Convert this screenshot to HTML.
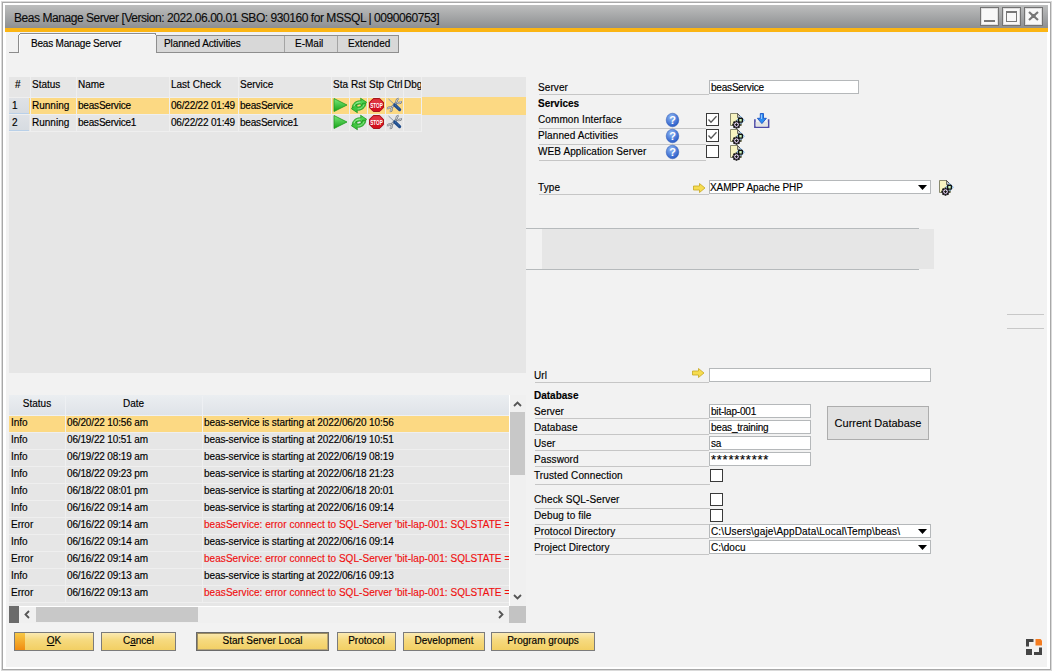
<!DOCTYPE html><html><head><meta charset="utf-8"><style>
*{margin:0;padding:0;box-sizing:border-box}
html,body{width:1054px;height:672px;overflow:hidden;background:#fff}
body{position:relative;font-family:"Liberation Sans",sans-serif;font-size:10px;color:#000}
.a{position:absolute}
.t{position:absolute;white-space:nowrap;line-height:12px;font-size:10px;-webkit-text-stroke:0.15px currentColor}
.b{font-weight:bold}
.fld{position:absolute;border:1px solid #b5b8ba;background:#fff}
.cb{position:absolute;width:13px;height:13px;border:1px solid #3a3a3a;background:#fff}
.btn{position:absolute;top:632px;height:19px;border:1px solid #7b7b7b;background:linear-gradient(#fbeab3,#f6da80 40%,#f2cf63);}
.ll{position:absolute;height:1px;background:#c6c6c6}
svg{position:absolute;overflow:visible}
</style></head><body>
<div class="a" style="left:1px;top:1px;width:1051px;height:670px;border:1px solid #dadada"></div>
<div class="a" style="left:2px;top:2px;width:1049px;height:668px;border:1px solid #a8a8a8;background:#fff"></div>
<div class="a" style="left:5px;top:5px;width:1043px;height:23px;background:linear-gradient(#bdbebe,#8d8f91)"></div>
<div class="t" style="left:14px;top:10px;font-size:12px;line-height:16px;letter-spacing:-0.45px;color:#0a0a0a;-webkit-text-stroke:0.1px #0a0a0a">Beas Manage Server [Version: 2022.06.00.01 SBO: 930160 for MSSQL | 0090060753]</div>
<div class="a" style="left:980px;top:7px;width:19px;height:19px;border:1px solid #737373;background:#f8f8f8;box-shadow:inset 0 0 0 1px #dedede"></div>
<div class="a" style="left:1002px;top:7px;width:19px;height:19px;border:1px solid #737373;background:#f8f8f8;box-shadow:inset 0 0 0 1px #dedede"></div>
<div class="a" style="left:1024px;top:7px;width:19px;height:19px;border:1px solid #737373;background:#f8f8f8;box-shadow:inset 0 0 0 1px #dedede"></div>
<div class="a" style="left:984px;top:20px;width:11px;height:2px;background:#777"></div>
<div class="a" style="left:1006px;top:11px;width:11px;height:11px;border:1px solid #777;border-top-width:2px"></div>
<svg style="left:1028px;top:11px" width="11" height="10"><path d="M1 1L10 9M10 1L1 9" stroke="#777" stroke-width="2.2"/><rect x="3.5" y="3" width="4" height="4" fill="#777"/></svg>
<div class="a" style="left:5px;top:28px;width:1043px;height:4px;background:#fbb514"></div>
<div class="a" style="left:6px;top:32px;width:1041px;height:1px;background:#eef1f6"></div>
<div class="a" style="left:6px;top:33px;width:1041px;height:634px;background:#f2f2f2"></div>
<div class="a" style="left:9px;top:52px;width:10px;height:1px;background:#8c8c8c"></div>
<div class="a" style="left:18px;top:35px;width:1px;height:18px;background:#8c8c8c"></div>
<div class="a" style="left:19px;top:34px;width:1px;height:1px;background:#8c8c8c"></div>
<div class="a" style="left:20px;top:33px;width:136px;height:1px;background:#8c8c8c"></div>
<div class="a" style="left:19px;top:35px;width:1px;height:17px;background:#fbfbfb"></div>
<div class="a" style="left:20px;top:34px;width:135px;height:1px;background:#fbfbfb"></div>
<div class="a" style="left:155px;top:34px;width:1px;height:1px;background:#8c8c8c"></div>
<div class="t" style="left:31px;top:38px;letter-spacing:-0.2px">Beas Manage Server</div>
<div class="a" style="left:156px;top:35px;width:243px;height:18px;border:1px solid #8e8e8e;background:#d8d8d8"></div>
<div class="a" style="left:284px;top:36px;width:1px;height:16px;background:#a4a4a4"></div>
<div class="a" style="left:337px;top:36px;width:1px;height:16px;background:#a4a4a4"></div>
<div class="t" style="left:164px;top:38px;letter-spacing:-0.1px">Planned Activities</div>
<div class="t" style="left:295px;top:38px;">E-Mail</div>
<div class="t" style="left:348px;top:38px;">Extended</div>
<div class="a" style="left:9px;top:77px;width:517px;height:296px;background:#e6e6e6"></div>
<div class="a" style="left:30px;top:77px;width:1px;height:55px;background:#efefef"></div>
<div class="a" style="left:76px;top:77px;width:1px;height:55px;background:#efefef"></div>
<div class="a" style="left:169px;top:77px;width:1px;height:55px;background:#efefef"></div>
<div class="a" style="left:238px;top:77px;width:1px;height:55px;background:#efefef"></div>
<div class="a" style="left:331px;top:77px;width:1px;height:55px;background:#efefef"></div>
<div class="a" style="left:349px;top:77px;width:1px;height:55px;background:#efefef"></div>
<div class="a" style="left:367px;top:77px;width:1px;height:55px;background:#efefef"></div>
<div class="a" style="left:385px;top:77px;width:1px;height:55px;background:#efefef"></div>
<div class="a" style="left:403px;top:77px;width:1px;height:55px;background:#efefef"></div>
<div class="a" style="left:421px;top:77px;width:1px;height:55px;background:#efefef"></div>
<div class="a" style="left:9px;top:97px;width:413px;height:1px;background:#efefef"></div>
<div class="a" style="left:29px;top:98px;width:393px;height:16px;background:#fcd983"></div>
<div class="a" style="left:422px;top:97px;width:104px;height:18px;background:#fcd983"></div>
<div class="a" style="left:30px;top:98px;width:1px;height:16px;background:#efefef"></div>
<div class="a" style="left:76px;top:98px;width:1px;height:16px;background:#efefef"></div>
<div class="a" style="left:169px;top:98px;width:1px;height:16px;background:#efefef"></div>
<div class="a" style="left:238px;top:98px;width:1px;height:16px;background:#efefef"></div>
<div class="a" style="left:331px;top:98px;width:1px;height:16px;background:#efefef"></div>
<div class="a" style="left:349px;top:98px;width:1px;height:16px;background:#efefef"></div>
<div class="a" style="left:367px;top:98px;width:1px;height:16px;background:#efefef"></div>
<div class="a" style="left:385px;top:98px;width:1px;height:16px;background:#efefef"></div>
<div class="a" style="left:403px;top:98px;width:1px;height:16px;background:#efefef"></div>
<div class="a" style="left:421px;top:98px;width:1px;height:16px;background:#efefef"></div>
<div class="a" style="left:9px;top:114px;width:413px;height:1px;background:#efefef"></div>
<div class="a" style="left:9px;top:131px;width:413px;height:1px;background:#efefef"></div>
<div class="a" style="left:9px;top:98px;width:20px;height:16px;background:linear-gradient(#dfe2e6,#d6dbe1)"></div>
<div class="a" style="left:9px;top:113px;width:20px;height:1px;background:#b9d0e8"></div>
<div class="a" style="left:9px;top:115px;width:20px;height:16px;background:linear-gradient(#dfe2e6,#d6dbe1)"></div>
<div class="a" style="left:9px;top:130px;width:20px;height:1px;background:#b9d0e8"></div>
<div class="t" style="left:15px;top:79px;font-size:10px">#</div>
<div class="t" style="left:32px;top:79px;">Status</div>
<div class="t" style="left:78px;top:79px;">Name</div>
<div class="t" style="left:171px;top:79px;">Last Check</div>
<div class="t" style="left:240px;top:79px;">Service</div>
<div class="t" style="left:333px;top:79px;width:16px;overflow:hidden">Sta</div>
<div class="t" style="left:351px;top:79px;width:16px;overflow:hidden">Rst</div>
<div class="t" style="left:369px;top:79px;width:16px;overflow:hidden">Stp</div>
<div class="t" style="left:387px;top:79px;width:17px;overflow:hidden">Ctrl</div>
<div class="t" style="left:404px;top:79px;width:17px;overflow:hidden">Dbg</div>
<div class="t" style="left:12px;top:100px;">1</div>
<div class="t" style="left:32px;top:100px;">Running</div>
<div class="t" style="left:78px;top:100px;letter-spacing:-0.2px">beasService</div>
<div class="t" style="left:171px;top:100px;letter-spacing:-0.2px">06/22/22 01:49</div>
<div class="t" style="left:240px;top:100px;letter-spacing:-0.2px">beasService</div>
<svg style="left:333px;top:98px" width="15" height="15" viewBox="0 0 15 15"><defs><linearGradient id="gp1" x1="0" y1="0" x2="0" y2="1"><stop offset="0" stop-color="#7be87b"/><stop offset="1" stop-color="#16a316"/></linearGradient></defs><path d="M1 0.5L14 7L1 13.5Z" fill="url(#gp1)" stroke="#1d9a1d" stroke-width="0.8"/></svg>
<svg style="left:351px;top:98px" width="16" height="15" viewBox="0 0 16 15"><path d="M1.2 9.8C1.5 5.2 5.5 2.3 10 2.8L9.6 0.3L15.6 4.3L10.2 9L10.1 6C7.3 5.6 4.8 7 4.3 9.8Z" fill="#4fd24f" stroke="#1c961c" stroke-width="0.8" stroke-linejoin="round"/><path d="M14.8 5.2C14.5 9.8 10.5 12.7 6 12.2L6.4 14.7L0.4 10.7L5.8 6L5.9 9C8.7 9.4 11.2 8 11.7 5.2Z" fill="#3fc43f" stroke="#1c961c" stroke-width="0.8" stroke-linejoin="round"/><path d="M3 8.5C3.5 6 6 4 9.5 4" stroke="#aef0ae" stroke-width="0.8" fill="none"/><path d="M13 6.5C12.5 9 10 11 6.5 11" stroke="#9ae89a" stroke-width="0.8" fill="none"/></svg>
<svg style="left:369px;top:98px" width="15" height="14" viewBox="0 0 15 14"><path d="M4.3 0.5H10.7L14.5 4.3V9.7L10.7 13.5H4.3L0.5 9.7V4.3Z" fill="#d4101f" stroke="#9c0a14" stroke-width="0.9"/><path d="M4.6 1.3H10.4L13.6 4.5V6.5H1.4V4.5Z" fill="#e8505a" opacity="0.55"/><text x="7.5" y="9.6" font-size="7" font-weight="bold" fill="#fff" text-anchor="middle" textLength="12.6" lengthAdjust="spacingAndGlyphs" font-family="Liberation Sans">STOP</text></svg>
<svg style="left:387px;top:98px" width="15" height="14" viewBox="0 0 15 14"><path d="M1.5 1L7.2 6.3" stroke="#8796a6" stroke-width="1"/><path d="M3.2 10.8L10.6 3.4" stroke="#737a82" stroke-width="2.4"/><path d="M3.2 10.8L10.6 3.4" stroke="#c9cdd2" stroke-width="1.2"/><path d="M14 3A2.2 2.2 0 1 1 11.8 0.8" fill="none" stroke="#737a82" stroke-width="2.2"/><path d="M14 3A2.2 2.2 0 1 1 11.8 0.8" fill="none" stroke="#d4d8dc" stroke-width="1"/><path d="M0.8 11.2A2 2 0 1 1 2.8 13.2" fill="none" stroke="#737a82" stroke-width="2"/><path d="M0.8 11.2A2 2 0 1 1 2.8 13.2" fill="none" stroke="#d0d4d8" stroke-width="0.9"/><path d="M7.8 7L12.6 11.6" stroke="#1d4a8a" stroke-width="3.2" stroke-linecap="round"/><path d="M8.3 7L12.3 10.8" stroke="#4f86c6" stroke-width="1" stroke-dasharray="1 0.8"/></svg>
<div class="t" style="left:12px;top:117px;">2</div>
<div class="t" style="left:32px;top:117px;">Running</div>
<div class="t" style="left:78px;top:117px;letter-spacing:-0.2px">beasService1</div>
<div class="t" style="left:171px;top:117px;letter-spacing:-0.2px">06/22/22 01:49</div>
<div class="t" style="left:240px;top:117px;letter-spacing:-0.2px">beasService1</div>
<svg style="left:333px;top:115px" width="15" height="15" viewBox="0 0 15 15"><defs><linearGradient id="gp2" x1="0" y1="0" x2="0" y2="1"><stop offset="0" stop-color="#7be87b"/><stop offset="1" stop-color="#16a316"/></linearGradient></defs><path d="M1 0.5L14 7L1 13.5Z" fill="url(#gp2)" stroke="#1d9a1d" stroke-width="0.8"/></svg>
<svg style="left:351px;top:115px" width="16" height="15" viewBox="0 0 16 15"><path d="M1.2 9.8C1.5 5.2 5.5 2.3 10 2.8L9.6 0.3L15.6 4.3L10.2 9L10.1 6C7.3 5.6 4.8 7 4.3 9.8Z" fill="#4fd24f" stroke="#1c961c" stroke-width="0.8" stroke-linejoin="round"/><path d="M14.8 5.2C14.5 9.8 10.5 12.7 6 12.2L6.4 14.7L0.4 10.7L5.8 6L5.9 9C8.7 9.4 11.2 8 11.7 5.2Z" fill="#3fc43f" stroke="#1c961c" stroke-width="0.8" stroke-linejoin="round"/><path d="M3 8.5C3.5 6 6 4 9.5 4" stroke="#aef0ae" stroke-width="0.8" fill="none"/><path d="M13 6.5C12.5 9 10 11 6.5 11" stroke="#9ae89a" stroke-width="0.8" fill="none"/></svg>
<svg style="left:369px;top:115px" width="15" height="14" viewBox="0 0 15 14"><path d="M4.3 0.5H10.7L14.5 4.3V9.7L10.7 13.5H4.3L0.5 9.7V4.3Z" fill="#d4101f" stroke="#9c0a14" stroke-width="0.9"/><path d="M4.6 1.3H10.4L13.6 4.5V6.5H1.4V4.5Z" fill="#e8505a" opacity="0.55"/><text x="7.5" y="9.6" font-size="7" font-weight="bold" fill="#fff" text-anchor="middle" textLength="12.6" lengthAdjust="spacingAndGlyphs" font-family="Liberation Sans">STOP</text></svg>
<svg style="left:387px;top:115px" width="15" height="14" viewBox="0 0 15 14"><path d="M1.5 1L7.2 6.3" stroke="#8796a6" stroke-width="1"/><path d="M3.2 10.8L10.6 3.4" stroke="#737a82" stroke-width="2.4"/><path d="M3.2 10.8L10.6 3.4" stroke="#c9cdd2" stroke-width="1.2"/><path d="M14 3A2.2 2.2 0 1 1 11.8 0.8" fill="none" stroke="#737a82" stroke-width="2.2"/><path d="M14 3A2.2 2.2 0 1 1 11.8 0.8" fill="none" stroke="#d4d8dc" stroke-width="1"/><path d="M0.8 11.2A2 2 0 1 1 2.8 13.2" fill="none" stroke="#737a82" stroke-width="2"/><path d="M0.8 11.2A2 2 0 1 1 2.8 13.2" fill="none" stroke="#d0d4d8" stroke-width="0.9"/><path d="M7.8 7L12.6 11.6" stroke="#1d4a8a" stroke-width="3.2" stroke-linecap="round"/><path d="M8.3 7L12.3 10.8" stroke="#4f86c6" stroke-width="1" stroke-dasharray="1 0.8"/></svg>
<div class="a" style="left:9px;top:395px;width:500px;height:211px;background:#e6e6e6"></div>
<div class="a" style="left:9px;top:395px;width:500px;height:20px;background:linear-gradient(#ebeef1,#dfe3e8)"></div>
<div class="a" style="left:9px;top:415px;width:500px;height:1px;background:#eef0f3"></div>
<div class="a" style="left:65px;top:396px;width:1px;height:20px;background:#eef0f3"></div>
<div class="a" style="left:202px;top:396px;width:1px;height:20px;background:#eef0f3"></div>
<div class="t" style="left:9px;top:398px;width:56px;text-align:center">Status</div>
<div class="t" style="left:65px;top:398px;width:137px;text-align:center">Date</div>
<div class="a" style="left:9px;top:416px;width:500px;height:16px;background:#fcd983"></div>
<div class="a" style="left:9px;top:432px;width:500px;height:1px;background:#efefef"></div>
<div class="a" style="left:65px;top:416px;width:1px;height:16px;background:#efefef"></div>
<div class="a" style="left:202px;top:416px;width:1px;height:16px;background:#efefef"></div>
<div class="t" style="left:11px;top:417px;">Info</div>
<div class="t" style="left:67px;top:417px;letter-spacing:-0.15px">06/20/22 10:56 am</div>
<div class="t" style="left:204px;top:417px;width:305px;overflow:hidden;letter-spacing:-0.1px">beas-service is starting at 2022/06/20 10:56</div>
<div class="a" style="left:9px;top:449px;width:500px;height:1px;background:#efefef"></div>
<div class="a" style="left:65px;top:433px;width:1px;height:16px;background:#efefef"></div>
<div class="a" style="left:202px;top:433px;width:1px;height:16px;background:#efefef"></div>
<div class="t" style="left:11px;top:434px;">Info</div>
<div class="t" style="left:67px;top:434px;letter-spacing:-0.15px">06/19/22 10:51 am</div>
<div class="t" style="left:204px;top:434px;width:305px;overflow:hidden;letter-spacing:-0.1px">beas-service is starting at 2022/06/19 10:51</div>
<div class="a" style="left:9px;top:466px;width:500px;height:1px;background:#efefef"></div>
<div class="a" style="left:65px;top:450px;width:1px;height:16px;background:#efefef"></div>
<div class="a" style="left:202px;top:450px;width:1px;height:16px;background:#efefef"></div>
<div class="t" style="left:11px;top:451px;">Info</div>
<div class="t" style="left:67px;top:451px;letter-spacing:-0.15px">06/19/22 08:19 am</div>
<div class="t" style="left:204px;top:451px;width:305px;overflow:hidden;letter-spacing:-0.1px">beas-service is starting at 2022/06/19 08:19</div>
<div class="a" style="left:9px;top:483px;width:500px;height:1px;background:#efefef"></div>
<div class="a" style="left:65px;top:467px;width:1px;height:16px;background:#efefef"></div>
<div class="a" style="left:202px;top:467px;width:1px;height:16px;background:#efefef"></div>
<div class="t" style="left:11px;top:468px;">Info</div>
<div class="t" style="left:67px;top:468px;letter-spacing:-0.15px">06/18/22 09:23 pm</div>
<div class="t" style="left:204px;top:468px;width:305px;overflow:hidden;letter-spacing:-0.1px">beas-service is starting at 2022/06/18 21:23</div>
<div class="a" style="left:9px;top:500px;width:500px;height:1px;background:#efefef"></div>
<div class="a" style="left:65px;top:484px;width:1px;height:16px;background:#efefef"></div>
<div class="a" style="left:202px;top:484px;width:1px;height:16px;background:#efefef"></div>
<div class="t" style="left:11px;top:485px;">Info</div>
<div class="t" style="left:67px;top:485px;letter-spacing:-0.15px">06/18/22 08:01 pm</div>
<div class="t" style="left:204px;top:485px;width:305px;overflow:hidden;letter-spacing:-0.1px">beas-service is starting at 2022/06/18 20:01</div>
<div class="a" style="left:9px;top:517px;width:500px;height:1px;background:#efefef"></div>
<div class="a" style="left:65px;top:501px;width:1px;height:16px;background:#efefef"></div>
<div class="a" style="left:202px;top:501px;width:1px;height:16px;background:#efefef"></div>
<div class="t" style="left:11px;top:502px;">Info</div>
<div class="t" style="left:67px;top:502px;letter-spacing:-0.15px">06/16/22 09:14 am</div>
<div class="t" style="left:204px;top:502px;width:305px;overflow:hidden;letter-spacing:-0.1px">beas-service is starting at 2022/06/16 09:14</div>
<div class="a" style="left:9px;top:534px;width:500px;height:1px;background:#efefef"></div>
<div class="a" style="left:65px;top:518px;width:1px;height:16px;background:#efefef"></div>
<div class="a" style="left:202px;top:518px;width:1px;height:16px;background:#efefef"></div>
<div class="t" style="left:11px;top:519px;">Error</div>
<div class="t" style="left:67px;top:519px;letter-spacing:-0.15px">06/16/22 09:14 am</div>
<div class="t" style="left:204px;top:519px;width:305px;overflow:hidden;color:#f01010;letter-spacing:0.05px">beasService: error connect to SQL-Server 'bit-lap-001: SQLSTATE = 08001</div>
<div class="a" style="left:9px;top:551px;width:500px;height:1px;background:#efefef"></div>
<div class="a" style="left:65px;top:535px;width:1px;height:16px;background:#efefef"></div>
<div class="a" style="left:202px;top:535px;width:1px;height:16px;background:#efefef"></div>
<div class="t" style="left:11px;top:536px;">Info</div>
<div class="t" style="left:67px;top:536px;letter-spacing:-0.15px">06/16/22 09:14 am</div>
<div class="t" style="left:204px;top:536px;width:305px;overflow:hidden;letter-spacing:-0.1px">beas-service is starting at 2022/06/16 09:14</div>
<div class="a" style="left:9px;top:568px;width:500px;height:1px;background:#efefef"></div>
<div class="a" style="left:65px;top:552px;width:1px;height:16px;background:#efefef"></div>
<div class="a" style="left:202px;top:552px;width:1px;height:16px;background:#efefef"></div>
<div class="t" style="left:11px;top:553px;">Error</div>
<div class="t" style="left:67px;top:553px;letter-spacing:-0.15px">06/16/22 09:14 am</div>
<div class="t" style="left:204px;top:553px;width:305px;overflow:hidden;color:#f01010;letter-spacing:0.05px">beasService: error connect to SQL-Server 'bit-lap-001: SQLSTATE = 08001</div>
<div class="a" style="left:9px;top:585px;width:500px;height:1px;background:#efefef"></div>
<div class="a" style="left:65px;top:569px;width:1px;height:16px;background:#efefef"></div>
<div class="a" style="left:202px;top:569px;width:1px;height:16px;background:#efefef"></div>
<div class="t" style="left:11px;top:570px;">Info</div>
<div class="t" style="left:67px;top:570px;letter-spacing:-0.15px">06/16/22 09:13 am</div>
<div class="t" style="left:204px;top:570px;width:305px;overflow:hidden;letter-spacing:-0.1px">beas-service is starting at 2022/06/16 09:13</div>
<div class="a" style="left:9px;top:602px;width:500px;height:1px;background:#efefef"></div>
<div class="a" style="left:65px;top:586px;width:1px;height:16px;background:#efefef"></div>
<div class="a" style="left:202px;top:586px;width:1px;height:16px;background:#efefef"></div>
<div class="t" style="left:11px;top:587px;">Error</div>
<div class="t" style="left:67px;top:587px;letter-spacing:-0.15px">06/16/22 09:13 am</div>
<div class="t" style="left:204px;top:587px;width:305px;overflow:hidden;color:#f01010;letter-spacing:0.05px">beasService: error connect to SQL-Server 'bit-lap-001: SQLSTATE = 08001</div>
<div class="a" style="left:509px;top:395px;width:17px;height:211px;background:#f0f0f0;border-left:1px solid #fff"></div>
<svg style="left:513px;top:400px" width="9" height="8"><path d="M1 6L4.5 2.5L8 6" stroke="#555" stroke-width="1.8" fill="none"/></svg>
<div class="a" style="left:510px;top:412px;width:15px;height:63px;background:#c8c8c8"></div>
<svg style="left:513px;top:593px" width="9" height="8"><path d="M1 2L4.5 5.5L8 2" stroke="#555" stroke-width="1.8" fill="none"/></svg>
<div class="a" style="left:9px;top:606px;width:500px;height:17px;background:#f0f0f0;border-top:1px solid #fff"></div>
<div class="a" style="left:9px;top:606px;width:10px;height:17px;background:#6b6b6b"></div>
<svg style="left:23px;top:610px" width="8" height="9"><path d="M6 1L2.5 4.5L6 8" stroke="#555" stroke-width="1.8" fill="none"/></svg>
<div class="a" style="left:36px;top:607px;width:162px;height:15px;background:#c8c8c8"></div>
<svg style="left:497px;top:610px" width="8" height="9"><path d="M2 1L5.5 4.5L2 8" stroke="#555" stroke-width="1.8" fill="none"/></svg>
<div class="a" style="left:509px;top:606px;width:17px;height:17px;background:#c3c3c3"></div>
<div class="t" style="left:538px;top:82px;letter-spacing:0.1px">Server</div>
<div class="ll" style="left:539px;top:94px;width:170px"></div>
<div class="fld" style="left:709px;top:80px;width:150px;height:14px"></div>
<div class="t" style="left:711px;top:82px;letter-spacing:-0.2px">beasService</div>
<div class="t" style="left:538px;top:98px;font-weight:bold">Services</div>
<div class="t" style="left:538px;top:114px;letter-spacing:0.1px">Common Interface</div>
<div class="ll" style="left:539px;top:128px;width:167px"></div>
<svg style="left:666px;top:113px" width="14" height="14" viewBox="0 0 14 14"><defs><radialGradient id="hq0" cx="0.4" cy="0.3" r="0.75"><stop offset="0" stop-color="#8fb8f5"/><stop offset="1" stop-color="#2255c4"/></radialGradient></defs><ellipse cx="6.5" cy="7" rx="6.3" ry="6.8" fill="url(#hq0)" stroke="#2a56b0" stroke-width="0.5"/><text x="6.6" y="11.3" font-size="11" font-weight="bold" fill="#fff" text-anchor="middle" font-family="Liberation Sans">?</text></svg>
<div class="cb" style="left:706px;top:113px;border-width:1.5px"></div>
<svg style="left:706px;top:113px" width="13" height="13"><path d="M2.5 6.5L5 9.2L10.5 3.3" stroke="#555" stroke-width="1.3" fill="none"/></svg>
<svg style="left:730px;top:113px" width="16" height="17" viewBox="0 0 16 17"><path d="M0.5 0.5H7.5L11.5 4.5V12.5H0.5Z" fill="#f7f3c0" stroke="#7d7d62" stroke-width="0.9"/><path d="M7.5 0.5V4.5H11.5Z" fill="#c4c4c4" stroke="#222" stroke-width="0.6"/><path d="M10.5 3.3L14.3 7.2L10.5 11.1L6.7 7.2Z" fill="#fff" stroke="#4b9be3" stroke-width="0.8"/><rect x="8.6" y="5.3" width="3.8" height="3.8" rx="0.8" fill="#c8f2b8" stroke="#111" stroke-width="1.4"/><path d="M10.71 10.75L10.71 12.45L9.40 12.69L9.32 12.88L10.08 13.98L8.88 15.18L7.78 14.42L7.59 14.50L7.35 15.81L5.65 15.81L5.41 14.50L5.22 14.42L4.12 15.18L2.92 13.98L3.68 12.88L3.60 12.69L2.29 12.45L2.29 10.75L3.60 10.51L3.68 10.32L2.92 9.22L4.12 8.02L5.22 8.78L5.41 8.70L5.65 7.39L7.35 7.39L7.59 8.70L7.78 8.78L8.88 8.02L10.08 9.22L9.32 10.32L9.40 10.51Z" fill="#111"/><circle cx="6.5" cy="11.6" r="2.1" fill="#fff" stroke="#c9a6e6" stroke-width="0.6"/><path d="M6.5 10.3V12.9M5.2 11.6H7.8" stroke="#111" stroke-width="1.2"/></svg>
<div class="t" style="left:538px;top:130px;letter-spacing:0.1px">Planned Activities</div>
<div class="ll" style="left:539px;top:144px;width:167px"></div>
<svg style="left:666px;top:129px" width="14" height="14" viewBox="0 0 14 14"><defs><radialGradient id="hq1" cx="0.4" cy="0.3" r="0.75"><stop offset="0" stop-color="#8fb8f5"/><stop offset="1" stop-color="#2255c4"/></radialGradient></defs><ellipse cx="6.5" cy="7" rx="6.3" ry="6.8" fill="url(#hq1)" stroke="#2a56b0" stroke-width="0.5"/><text x="6.6" y="11.3" font-size="11" font-weight="bold" fill="#fff" text-anchor="middle" font-family="Liberation Sans">?</text></svg>
<div class="cb" style="left:706px;top:129px;border-width:1.5px"></div>
<svg style="left:706px;top:129px" width="13" height="13"><path d="M2.5 6.5L5 9.2L10.5 3.3" stroke="#555" stroke-width="1.3" fill="none"/></svg>
<svg style="left:730px;top:129px" width="16" height="17" viewBox="0 0 16 17"><path d="M0.5 0.5H7.5L11.5 4.5V12.5H0.5Z" fill="#f7f3c0" stroke="#7d7d62" stroke-width="0.9"/><path d="M7.5 0.5V4.5H11.5Z" fill="#c4c4c4" stroke="#222" stroke-width="0.6"/><path d="M10.5 3.3L14.3 7.2L10.5 11.1L6.7 7.2Z" fill="#fff" stroke="#4b9be3" stroke-width="0.8"/><rect x="8.6" y="5.3" width="3.8" height="3.8" rx="0.8" fill="#c8f2b8" stroke="#111" stroke-width="1.4"/><path d="M10.71 10.75L10.71 12.45L9.40 12.69L9.32 12.88L10.08 13.98L8.88 15.18L7.78 14.42L7.59 14.50L7.35 15.81L5.65 15.81L5.41 14.50L5.22 14.42L4.12 15.18L2.92 13.98L3.68 12.88L3.60 12.69L2.29 12.45L2.29 10.75L3.60 10.51L3.68 10.32L2.92 9.22L4.12 8.02L5.22 8.78L5.41 8.70L5.65 7.39L7.35 7.39L7.59 8.70L7.78 8.78L8.88 8.02L10.08 9.22L9.32 10.32L9.40 10.51Z" fill="#111"/><circle cx="6.5" cy="11.6" r="2.1" fill="#fff" stroke="#c9a6e6" stroke-width="0.6"/><path d="M6.5 10.3V12.9M5.2 11.6H7.8" stroke="#111" stroke-width="1.2"/></svg>
<div class="t" style="left:538px;top:146px;letter-spacing:0.1px">WEB Application Server</div>
<div class="ll" style="left:539px;top:160px;width:167px"></div>
<svg style="left:666px;top:145px" width="14" height="14" viewBox="0 0 14 14"><defs><radialGradient id="hq2" cx="0.4" cy="0.3" r="0.75"><stop offset="0" stop-color="#8fb8f5"/><stop offset="1" stop-color="#2255c4"/></radialGradient></defs><ellipse cx="6.5" cy="7" rx="6.3" ry="6.8" fill="url(#hq2)" stroke="#2a56b0" stroke-width="0.5"/><text x="6.6" y="11.3" font-size="11" font-weight="bold" fill="#fff" text-anchor="middle" font-family="Liberation Sans">?</text></svg>
<div class="cb" style="left:706px;top:145px;border-width:1.5px"></div>
<svg style="left:730px;top:145px" width="16" height="17" viewBox="0 0 16 17"><path d="M0.5 0.5H7.5L11.5 4.5V12.5H0.5Z" fill="#f7f3c0" stroke="#7d7d62" stroke-width="0.9"/><path d="M7.5 0.5V4.5H11.5Z" fill="#c4c4c4" stroke="#222" stroke-width="0.6"/><path d="M10.5 3.3L14.3 7.2L10.5 11.1L6.7 7.2Z" fill="#fff" stroke="#4b9be3" stroke-width="0.8"/><rect x="8.6" y="5.3" width="3.8" height="3.8" rx="0.8" fill="#c8f2b8" stroke="#111" stroke-width="1.4"/><path d="M10.71 10.75L10.71 12.45L9.40 12.69L9.32 12.88L10.08 13.98L8.88 15.18L7.78 14.42L7.59 14.50L7.35 15.81L5.65 15.81L5.41 14.50L5.22 14.42L4.12 15.18L2.92 13.98L3.68 12.88L3.60 12.69L2.29 12.45L2.29 10.75L3.60 10.51L3.68 10.32L2.92 9.22L4.12 8.02L5.22 8.78L5.41 8.70L5.65 7.39L7.35 7.39L7.59 8.70L7.78 8.78L8.88 8.02L10.08 9.22L9.32 10.32L9.40 10.51Z" fill="#111"/><circle cx="6.5" cy="11.6" r="2.1" fill="#fff" stroke="#c9a6e6" stroke-width="0.6"/><path d="M6.5 10.3V12.9M5.2 11.6H7.8" stroke="#111" stroke-width="1.2"/></svg>
<svg style="left:754px;top:113px" width="16" height="16" viewBox="0 0 16 16"><path d="M0.9 6.2V14.2H14.6V6.2" fill="none" stroke="#4d4aa6" stroke-width="1.6"/><rect x="1.7" y="9" width="12.1" height="4.5" fill="#e3e3e3"/><path d="M6.3 0.5H9.5V5.3H12.4L7.9 10.6L3.4 5.3H6.3Z" fill="#2d8ef2" stroke="#1b55c6" stroke-width="0.9" stroke-linejoin="round"/><path d="M7.4 1.5V6" stroke="#bfe0ff" stroke-width="0.8"/></svg>
<div class="t" style="left:538px;top:182px;letter-spacing:0.1px">Type</div>
<div class="ll" style="left:539px;top:194px;width:170px"></div>
<svg style="left:693px;top:183px" width="13" height="10" viewBox="0 0 13 10"><path d="M0.5 3H6.5V0.5L12 5L6.5 9.5V7H0.5Z" fill="#f6dc50" stroke="#c8a820" stroke-width="0.8"/></svg>
<div class="fld" style="left:709px;top:180px;width:222px;height:14px"></div>
<div class="t" style="left:710px;top:182px;letter-spacing:-0.1px">XAMPP Apache PHP</div>
<svg style="left:918px;top:185px" width="10" height="6"><path d="M0 0H9L4.5 5Z" fill="#000"/></svg>
<svg style="left:939px;top:180px" width="16" height="17" viewBox="0 0 16 17"><path d="M0.5 0.5H7.5L11.5 4.5V12.5H0.5Z" fill="#f7f3c0" stroke="#7d7d62" stroke-width="0.9"/><path d="M7.5 0.5V4.5H11.5Z" fill="#c4c4c4" stroke="#222" stroke-width="0.6"/><path d="M10.5 3.3L14.3 7.2L10.5 11.1L6.7 7.2Z" fill="#fff" stroke="#4b9be3" stroke-width="0.8"/><rect x="8.6" y="5.3" width="3.8" height="3.8" rx="0.8" fill="#c8f2b8" stroke="#111" stroke-width="1.4"/><path d="M10.71 10.75L10.71 12.45L9.40 12.69L9.32 12.88L10.08 13.98L8.88 15.18L7.78 14.42L7.59 14.50L7.35 15.81L5.65 15.81L5.41 14.50L5.22 14.42L4.12 15.18L2.92 13.98L3.68 12.88L3.60 12.69L2.29 12.45L2.29 10.75L3.60 10.51L3.68 10.32L2.92 9.22L4.12 8.02L5.22 8.78L5.41 8.70L5.65 7.39L7.35 7.39L7.59 8.70L7.78 8.78L8.88 8.02L10.08 9.22L9.32 10.32L9.40 10.51Z" fill="#111"/><circle cx="6.5" cy="11.6" r="2.1" fill="#fff" stroke="#c9a6e6" stroke-width="0.6"/><path d="M6.5 10.3V12.9M5.2 11.6H7.8" stroke="#111" stroke-width="1.2"/></svg>
<div class="a" style="left:526px;top:228px;width:393px;height:1px;background:#b6babc"></div>
<div class="a" style="left:526px;top:269px;width:393px;height:1px;background:#b6babc"></div>
<div class="a" style="left:542px;top:229px;width:392px;height:40px;background:#e6e6e6"></div>
<div class="a" style="left:1007px;top:314px;width:37px;height:1px;background:#c8c8c8"></div>
<div class="a" style="left:1007px;top:328px;width:37px;height:1px;background:#c8c8c8"></div>
<div class="t" style="left:534px;top:370px;letter-spacing:0.1px">Url</div>
<div class="ll" style="left:535px;top:382px;width:174px"></div>
<svg style="left:692px;top:368px" width="13" height="10" viewBox="0 0 13 10"><path d="M0.5 3H6.5V0.5L12 5L6.5 9.5V7H0.5Z" fill="#f6dc50" stroke="#c8a820" stroke-width="0.8"/></svg>
<div class="fld" style="left:709px;top:368px;width:222px;height:14px"></div>
<div class="t" style="left:534px;top:390px;font-weight:bold">Database</div>
<div class="t" style="left:534px;top:406px;letter-spacing:0.1px">Server</div>
<div class="ll" style="left:535px;top:418px;width:174px"></div>
<div class="fld" style="left:709px;top:404px;width:102px;height:14px"></div>
<div class="t" style="left:711px;top:406px;letter-spacing:-0.2px">bit-lap-001</div>
<div class="t" style="left:534px;top:422px;letter-spacing:0.1px">Database</div>
<div class="ll" style="left:535px;top:434px;width:174px"></div>
<div class="fld" style="left:709px;top:420px;width:102px;height:14px"></div>
<div class="t" style="left:711px;top:422px;letter-spacing:-0.2px">beas_training</div>
<div class="t" style="left:534px;top:438px;letter-spacing:0.1px">User</div>
<div class="ll" style="left:535px;top:450px;width:174px"></div>
<div class="fld" style="left:709px;top:436px;width:102px;height:14px"></div>
<div class="t" style="left:711px;top:438px;letter-spacing:-0.2px">sa</div>
<div class="t" style="left:534px;top:454px;letter-spacing:0.1px">Password</div>
<div class="ll" style="left:535px;top:466px;width:174px"></div>
<div class="fld" style="left:709px;top:452px;width:102px;height:14px"></div>
<div class="t" style="left:711px;top:454px;font-size:13px;letter-spacing:0.75px">**********</div>
<div class="t" style="left:534px;top:470px;letter-spacing:0.1px">Trusted Connection</div>
<div class="ll" style="left:535px;top:484px;width:175px"></div>
<div class="cb" style="left:710px;top:469px"></div>
<div class="t" style="left:534px;top:494px;letter-spacing:0.1px">Check SQL-Server</div>
<div class="ll" style="left:535px;top:508px;width:175px"></div>
<div class="cb" style="left:710px;top:493px"></div>
<div class="t" style="left:534px;top:510px;letter-spacing:0.1px">Debug to file</div>
<div class="ll" style="left:535px;top:524px;width:175px"></div>
<div class="cb" style="left:710px;top:509px"></div>
<div class="t" style="left:534px;top:526px;letter-spacing:0.1px">Protocol Directory</div>
<div class="ll" style="left:535px;top:538px;width:174px"></div>
<div class="fld" style="left:709px;top:524px;width:222px;height:14px"></div>
<div class="t" style="left:711px;top:526px;letter-spacing:0.15px">C:\Users\gaje\AppData\Local\Temp\beas\</div>
<svg style="left:918px;top:529px" width="10" height="6"><path d="M0 0H9L4.5 5Z" fill="#000"/></svg>
<div class="t" style="left:534px;top:542px;letter-spacing:0.1px">Project Directory</div>
<div class="ll" style="left:535px;top:554px;width:174px"></div>
<div class="fld" style="left:709px;top:540px;width:222px;height:14px"></div>
<div class="t" style="left:711px;top:542px;">C:\docu</div>
<svg style="left:918px;top:545px" width="10" height="6"><path d="M0 0H9L4.5 5Z" fill="#000"/></svg>
<div class="a" style="left:827px;top:406px;width:102px;height:34px;border:1px solid #adadad;background:#e1e1e1"></div>
<div class="t" style="left:827px;top:416px;width:102px;text-align:center;font-size:11px;line-height:14px;-webkit-text-stroke:0.1px #000">Current Database</div>
<div class="btn" style="left:14px;width:80px;"></div>
<div class="a" style="left:15px;top:633px;width:10px;height:17px;background:linear-gradient(#f7c845,#f08c12)"></div>
<div class="t" style="left:14px;top:635px;width:80px;text-align:center"><u>O</u>K</div>
<div class="btn" style="left:101px;width:75px;"></div>
<div class="t" style="left:101px;top:635px;width:75px;text-align:center">C<u>a</u>ncel</div>
<div class="btn" style="left:196px;width:133px;border-color:#6a6a6a;box-shadow:inset 1px 1px 0 #9c8c60,inset -1px -1px 0 #b8a470;"></div>
<div class="t" style="left:196px;top:635px;width:133px;text-align:center">Start Server Local</div>
<div class="btn" style="left:337px;width:59px;"></div>
<div class="t" style="left:337px;top:635px;width:59px;text-align:center">Protocol</div>
<div class="btn" style="left:403px;width:82px;"></div>
<div class="t" style="left:403px;top:635px;width:82px;text-align:center">Development</div>
<div class="btn" style="left:491px;width:104px;"></div>
<div class="t" style="left:491px;top:635px;width:104px;text-align:center">Program groups</div>
<svg style="left:1026px;top:639px" width="16" height="16" viewBox="0 0 16 16"><path d="M0 0H7.5V3H3V7.5H0Z" fill="#454545"/><path d="M9.5 0H14.5L16 1.5V6.5H9.5Z" fill="#f47c20"/><rect x="0" y="10" width="6" height="6" fill="#454545"/><path d="M13 8.5H16V16H8V13H13Z" fill="#454545"/></svg>
</body></html>
